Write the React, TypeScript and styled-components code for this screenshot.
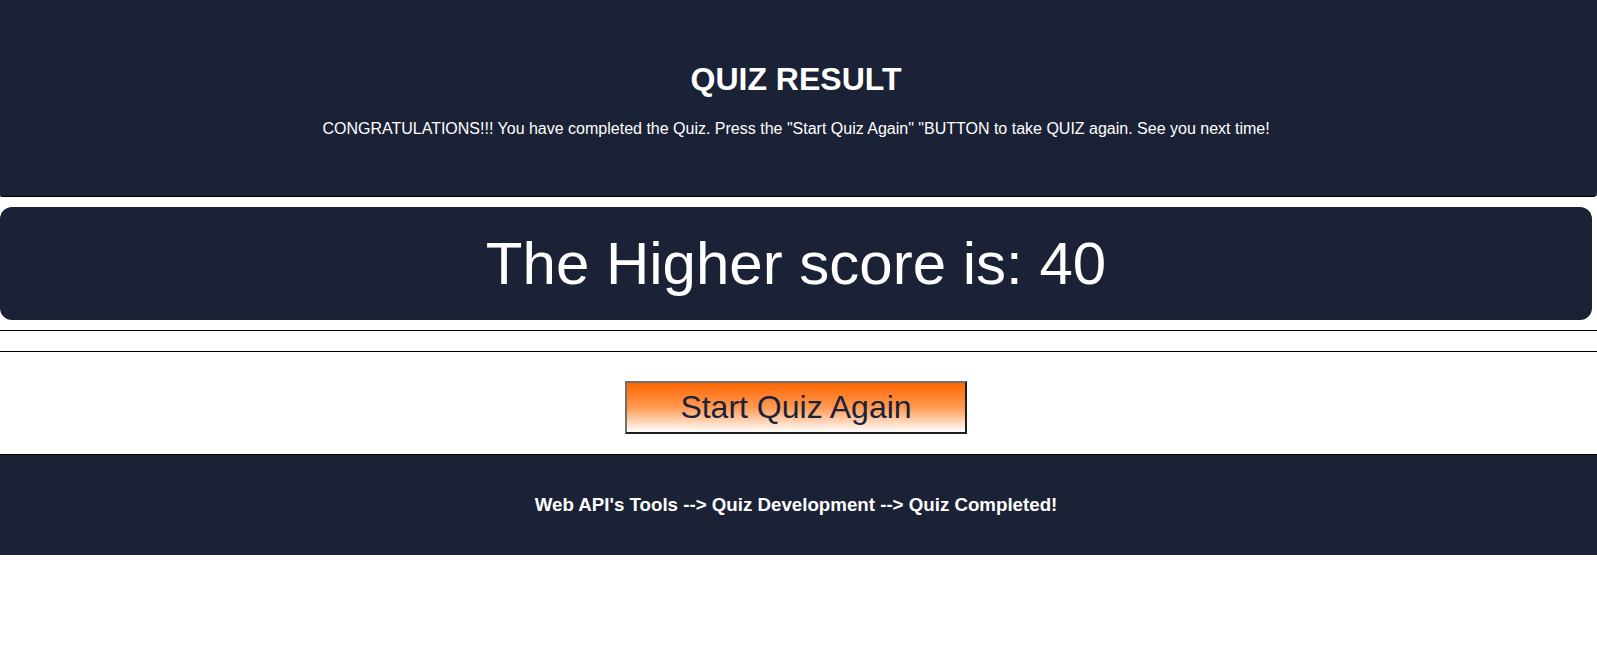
import React from "react";
import styled, { createGlobalStyle } from "styled-components";

const NAVY = "#1b2236";

const GlobalStyle = createGlobalStyle`
  html, body {
    margin: 0;
    padding: 0;
    background: #ffffff;
    font-family: "Liberation Sans", Arial, sans-serif;
    overflow-x: hidden;
  }
`;

const Page = styled.div`
  display: flex;
  flex-direction: column;
  width: 100%;
`;

const Header = styled.header`
  display: flex;
  flex-direction: column;
  align-items: center;
  gap: 22px;
  padding: 61px 5px 58px 0;
  background: ${NAVY};
  color: #ffffff;
  border-bottom: 1px solid #000000;
  border-bottom-right-radius: 4px;
  border-bottom-left-radius: 2px;
`;

const Title = styled.h1`
  margin: 0;
  font-size: 32px;
  line-height: 37px;
  font-weight: 700;
`;

const Message = styled.p`
  margin: 0;
  font-size: 16px;
  line-height: 18px;
`;

const ScoreCard = styled.section`
  display: flex;
  align-items: center;
  justify-content: center;
  height: 113px;
  margin: 10px 5px 0 0;
  background: ${NAVY};
  border-radius: 12px;
  color: #ffffff;
`;

const ScoreText = styled.h2`
  margin: 0;
  font-size: 60px;
  line-height: 69px;
  font-weight: 400;
`;

const Divider = styled.div`
  height: 20px;
  margin-top: 10px;
  border-top: 1px solid #000000;
  border-bottom: 1px solid #000000;
`;

const ActionBar = styled.section`
  display: flex;
  justify-content: center;
  padding: 29px 5px 20px 0;
  border-bottom: 1px solid #000000;
`;

const RestartButton = styled.button`
  font-family: "Liberation Sans", Arial, sans-serif;
  font-size: 32px;
  line-height: 37px;
  color: ${NAVY};
  padding: 6px 52px;
  width: 342px;
  height: 53px;
  background: linear-gradient(to bottom, #ff6600 0%, #ff9a55 50%, #ffffff 100%);
  border-width: 2px;
  border-style: solid;
  border-color: #707070 #1e1e1e #1e1e1e #707070;
  border-radius: 0;
  cursor: pointer;
`;

const Footer = styled.footer`
  display: flex;
  align-items: center;
  justify-content: center;
  height: 100px;
  padding-right: 5px;
  background: ${NAVY};
  color: #ffffff;
`;

const FooterText = styled.p`
  margin: 0;
  font-size: 18.72px;
  line-height: 22px;
  font-weight: 700;
`;

export default function App() {
  return (
    <>
      <GlobalStyle />
      <Page>
        <Header>
          <Title>QUIZ RESULT</Title>
          <Message>
            CONGRATULATIONS!!! You have completed the Quiz. Press the "Start Quiz Again" "BUTTON to take QUIZ again. See you next time!
          </Message>
        </Header>
        <ScoreCard>
          <ScoreText>The Higher score is: 40</ScoreText>
        </ScoreCard>
        <Divider />
        <ActionBar>
          <RestartButton type="button">Start Quiz Again</RestartButton>
        </ActionBar>
        <Footer>
          <FooterText>Web API's Tools --&gt; Quiz Development --&gt; Quiz Completed!</FooterText>
        </Footer>
      </Page>
    </>
  );
}
